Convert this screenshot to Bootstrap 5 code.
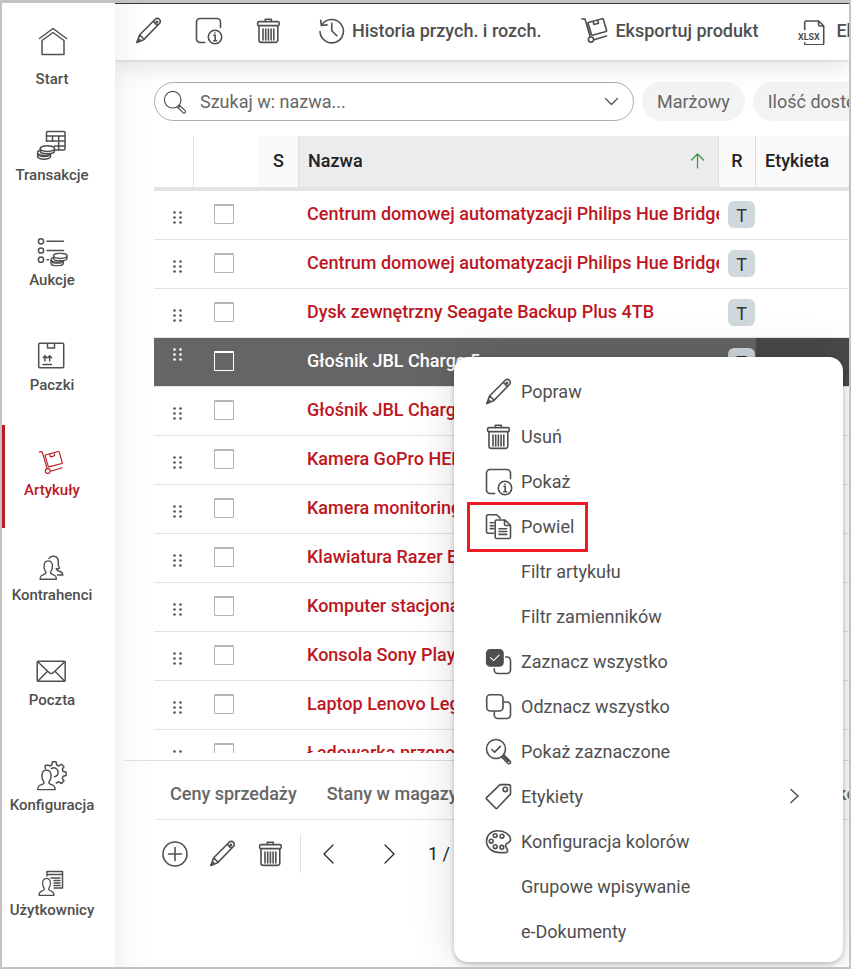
<!DOCTYPE html>
<html lang="pl">
<head>
<meta charset="utf-8">
<meta name="viewport" content="width=device-width, initial-scale=1">
<title>Artykuły</title>
<link rel="stylesheet" href="https://cdn.jsdelivr.net/npm/bootstrap@5.3.0/dist/css/bootstrap.min.css">
<style>
  :root { --ink: #4f4f4f; --red: #be1622; --rule: #e3e3e3; }
  body { font-family: Roboto, "Liberation Sans", sans-serif; font-size: 18px; line-height: 24px; color: var(--ink); }
  button { color: inherit; }
  svg { fill: none; stroke: currentColor; stroke-width: 1.5; stroke-linejoin: round; stroke-linecap: round; flex: none; display: block; }
  svg.thin { stroke-width: 1.2; }
  svg.sort-arrow { stroke: #2f9a3c; stroke-width: 1.2; }
  svg.grip-dots { fill: currentColor; stroke: none; }
  .app-frame { border: 2px solid #c3c3c3; border-top-width: 3px; min-height: 600px; }
  .side-nav { width: 113px; flex: none; padding-top: 2px; }
  .side-link { height: 105px; padding: 20px 13px 0 0; gap: 3px; font-size: 15px; line-height: 20px; font-weight: 500; color: var(--ink); text-decoration: none; position: relative; }
  .side-link:first-child { gap: 12px; }
  .side-link.active { color: var(--red); }
  .side-link.active::before { content: ""; position: absolute; left: 0; top: 0; width: 3px; height: 103px; background: var(--red); }
  .side-link svg { width: 32px; height: 32px; }
  .workspace { min-width: 0; border-top: 1px solid #343841; background: linear-gradient(to right, #f2f2f2, #fbfbfb 14px, #fff 40px); }
  .tool-bar { height: 56px; padding: 0 0 2px 20px; gap: 35px; background: linear-gradient(to right, #f6f6f6, #fff 30px); box-shadow: 0 1px 2px #d4d4d4, 0 6px 26px rgba(0,0,0,.12); flex: none; position: relative; }
  .tool-group { gap: 32px; }
  .text-group { gap: 40px; }
  .plain-btn { border: 0; background: none; padding: 0; display: flex; align-items: center; gap: 6px; white-space: nowrap; flex: none; }
  .text-group .plain-btn { font-weight: 500; }
  .text-group .plain-btn:last-child { gap: 10px; }
  .filter-bar { padding: 22px 0 15px 39px; gap: 8px; flex: none; }
  .search-box { flex: 0 0 480px; height: 39px; border: 1px solid #adadad; border-radius: 20px; background: #fff; padding: 0 14px 0 8px; }
  .search-box input { border: 0; outline: 0; background: none; min-width: 0; padding: 0 0 0 13px; color: #666; }
  .search-box input::placeholder { color: #666; opacity: 1; }
  .chip-btn { border: 0; border-radius: 20px; background: #f3f3f3; color: #666; padding: 0 15px; height: 39px; white-space: nowrap; flex: none; }
  .grid-wrap { margin: 0 0 7px 39px; flex: 1 1 0; min-height: 0; background: #fff; }
  .grid-table { table-layout: fixed; width: 100%; min-width: 695px; border-collapse: separate; border-spacing: 0; }
  .grid-table th { height: 55px; border-bottom: 4px solid var(--rule); padding: 0 0 2px 9px; font-weight: 500; color: #222; background: #fafafa; }
  .grid-table th.blank { background: #fff; }
  .grid-table th.sorted { background: #ececec; padding-right: 11px; }
  .grid-table th.edge { border-right: 1px solid #dedede; }
  .grid-table th.narrow { padding-left: 0; text-align: center; }
  .grid-table td { height: 49px; padding: 0; border-bottom: 1px solid var(--rule); white-space: nowrap; overflow: hidden; }
  .grid-table td.prod { padding: 0 0 2px 8px; font-weight: 500; color: var(--red); }
  .grid-table td.grip { padding: 5px 0 0 19px; color: #555; }
  .grid-table td.tick { padding: 0 0 2px 20px; }
  .grid-table tr.picked td { background: #656565; color: #fff; }
  .grid-table tr.picked td.grip { vertical-align: top; padding-top: 10px; }
  .grid-table tr.picked td.tagcol { background: #494949; }
  .tick input { appearance: none; display: block; width: 20px; height: 20px; margin: 0; border: 1px solid #b5b5b5; border-top-width: 2px; border-radius: 1px; background: #fff; }
  .picked .tick input { background: none; border-color: #fff; }
  .grid-table td.kind { padding: 0 0 2px 9px; }
  .type-tag { display: block; width: 27px; height: 27px; border-radius: 6px; background: #cfd8dd; color: #333; text-align: center; line-height: 29px; }
  .detail-pane { margin-left: 9px; border-top: 1px solid #dedede; height: 207px; flex: none; }
  .detail-tabs { margin-left: 32px; padding-left: 14px; gap: 30px; height: 59px; border-bottom: 1px solid var(--rule); padding-top: 8px; }
  .detail-tabs button { font-weight: 500; color: #666; }
  .detail-tabs .last-tab { width: 12px; margin-left: auto; }
  .detail-tools { margin: 14px 0 0 37px; height: 39px; }
  .detail-tools .edit-set { gap: 20px; padding-right: 15px; border-right: 1px solid var(--rule); height: 39px; }
  .detail-tools .page-set { gap: 33px; padding-left: 13px; color: #222; }
  .detail-tools .page-set span { margin-left: -8px; }
  .ctx-menu { position: absolute; right: 6px; bottom: 5px; width: 389px; padding: 12px 0 8px; border-radius: 14px; background: #fff; box-shadow: 0 2px 5px rgba(0,0,0,.24), 0 0 44px rgba(0,0,0,.14); }
  .ctx-item { height: 45px; width: 100%; border: 0; background: none; padding: 0 42px 0 31px; gap: 8px; text-align: left; position: relative; }
  .ctx-item.no-icon { padding-left: 67px; }
  .ctx-item.marked::after { content: ""; position: absolute; left: 13px; top: -2px; width: 121px; height: 50px; border: 3px solid #ed1c24; }
  .menu-icon { width: 28px; height: 28px; stroke-width: 1.6; }
</style>
</head>
<body>
<svg width="0" height="0" class="position-absolute" aria-hidden="true">
  <symbol id="i-pen" viewBox="0 0 28 28"><path d="M1.900 25.400l2.600-7.400L20.200 2.300a2.800 2.800 0 0 1 4.200 0 2.800 2.800 0 0 1 0 4.200L9 22.400zM4.900 18l3.900 4M18.400 4.400l4.100 4.200"/><path d="M2.200 25l2.400-2.400" stroke-width="2"/><circle cx="21.900" cy="5" r=".7"/></symbol>
  <symbol id="i-bin" viewBox="0 0 28 28"><rect x="2.600" y="4.600" width="21.600" height="4" rx="1.400"/><path d="M10.300 4.400V2.200h6v2.200M4 8.800V23a2.400 2.400 0 0 0 2.400 2.400h14A2.400 2.400 0 0 0 22.800 23V8.800M8 12v11M10.700 12v11M13.400 12v11M16.100 12v11M18.800 12v11"/></symbol>
  <symbol id="i-info" viewBox="0 0 28 28"><path d="M9.800 25.500H5a3.500 3.500 0 0 1-3.500-3.500V5A3.500 3.500 0 0 1 5 1.500h17A3.500 3.500 0 0 1 25.500 5v5.500"/><circle cx="20" cy="20" r="6.700"/><path d="M18.900 18.300h1.300v5.300M18.700 23.700h2.900M20 16v.3"/></symbol>
  <symbol id="i-copy" viewBox="0 0 28 28"><path d="M8.500 20.300H3a1.500 1.500 0 0 1-1.500-1.500V3.200A1.500 1.500 0 0 1 3 1.700h8.700l3.500 3.400M5.200 9.700h3.300M5.200 12.700h3.300M5.200 15.600h3.300M11.500 7H20l5.500 5.500v11.700a1.300 1.300 0 0 1-1.300 1.300H11.500a1.300 1.300 0 0 1-1.300-1.300V8.300A1.300 1.300 0 0 1 11.500 7zM19.500 7.300v3.900a1.300 1.300 0 0 0 1.300 1.300h4.400M14 15.700h7.700M14 18.500h7.700M14 21.400h7.700"/></symbol>
  <symbol id="i-all" viewBox="0 0 28 28"><rect x="1.700" y="1.700" width="16.300" height="16.300" rx="3.500" fill="currentColor"/><path d="M9.300 20.700V22a3.500 3.500 0 0 0 3.500 3.500h9.200a3.500 3.500 0 0 0 3.500-3.500v-9.500A3.500 3.500 0 0 0 22 9h-1.300"/><path d="M5.600 9.600l3 3 5.500-5.400" stroke="#fff" stroke-width="1.100"/></symbol>
  <symbol id="i-none" viewBox="0 0 28 28"><rect x="1.700" y="1.700" width="16.300" height="16.300" rx="3.500"/><path d="M9.300 18.500V22a3.500 3.500 0 0 0 3.500 3.500h9.200a3.500 3.500 0 0 0 3.500-3.500v-9.500A3.500 3.500 0 0 0 22 9h-3.500"/></symbol>
  <symbol id="i-found" viewBox="0 0 28 28"><circle cx="11" cy="11" r="9.500"/><path d="M6.800 11.500l2.900 2.600 5.600-5.700M16.500 19l6.300 6.300a1.500 1.500 0 0 0 2.200 0 1.500 1.500 0 0 0 0-2.200l-6.200-6.200M17.900 17.900l5.200 5.300"/></symbol>
  <symbol id="i-label" viewBox="0 0 28 28"><path d="M15 1.600h8.300a2.200 2.200 0 0 1 2.200 2.200v7.300L12.100 25.300a1 1 0 0 1-1.400 0L1.500 15.900a1 1 0 0 1 0-1.300z"/><circle cx="20.300" cy="6.400" r="2.200"/></symbol>
  <symbol id="i-palette" viewBox="0 0 28 28"><path d="M12.500 2.800C6 2.800 1.500 7.200 1.500 13.300c0 7 6.600 11.300 13.500 11.300h5.500c2 0 2.500-1.600 1.700-3.200-1.700-3.300-3-5 .7-6.500 1.900-.8 2.800-1.900 2.600-4.100C24.800 6.300 19.500 2.800 12.500 2.800z"/><circle cx="10.200" cy="7.600" r="1.900"/><circle cx="17" cy="8.200" r="1.900"/><circle cx="6.200" cy="13.200" r="1.900"/><circle cx="10.200" cy="18.700" r="1.900"/><circle cx="16.800" cy="19.300" r="1.900"/></symbol>
  <symbol id="i-cart" viewBox="0 0 28 28"><path d="M.8 2H4l5.300 18M13 22.800l12.500-3.700M7.300 5.400l14-3.700a.8.800 0 0 1 1 .6l3.300 11.200a.8.800 0 0 1-.6 1L11.300 18.200a.6.600 0 0 1-.8-.5L7 6a.5.500 0 0 1 .3-.6zM12 4.300l.9 3.100 4.600-1.200-.9-3.100"/><circle cx="10" cy="22.600" r="2.600"/></symbol>
  <symbol id="i-person" viewBox="0 0 20 22"><path d="M.8 21.200c0-3.600 1-4.200 3.200-4.900 2-.6 3.200-1.100 3.200-2.500 0-1.200-1.600-2.300-2-4.800C4.600 4.500 5.800 1 9.700 1s5.200 3.500 4.500 8c-.4 2.500-2 3.600-2 4.800 0 1.400 1.200 1.900 3.200 2.500 2.200.7 3.200 1.300 3.200 4.900z"/></symbol>
  <symbol id="i-coins" viewBox="0 0 19 15"><g fill="#fff"><ellipse cx="7.500" cy="11.200" rx="6.700" ry="3"/><path d="M.8 8.500c0 3.900 13.400 3.900 13.400 0z"/><ellipse cx="8" cy="7.600" rx="7" ry="2.800"/><path d="M3.800 4v2.300c0 3.300 14.200 3.300 14.200 0V4z"/><ellipse cx="10.900" cy="3.600" rx="7.200" ry="2.800"/></g></symbol>
</svg>

<div class="app-frame vh-100 d-flex overflow-hidden position-relative">
  <nav class="side-nav d-flex flex-column bg-white" aria-label="Menu główne">
    <a href="#" class="side-link d-flex flex-column align-items-center"><svg viewBox="36 25 32 32"><path d="M42 40.500V54.500H64V40.500L53 32.500zM39.500 38.500L53 28.500l13.500 10"/></svg>Start</a>
    <a href="#" class="side-link d-flex flex-column align-items-center"><svg viewBox="36 130 32 32"><rect x="46.500" y="131.500" width="18.500" height="18.500" rx="1"/><path d="M46.500 136H65M46.500 141H65M46.500 146H65M52.500 136v14M58.700 136v14"/><path d="M45 142h9v9h-9z" fill="#fff" stroke="none"/><use href="#i-coins" x="36.500" y="145" width="19" height="15"/></svg>Transakcje</a>
    <a href="#" class="side-link d-flex flex-column align-items-center"><svg viewBox="36 235 32 32"><circle cx="41" cy="241.300" r="2.600"/><circle cx="41" cy="250.500" r="2.600"/><circle cx="41" cy="259.700" r="2.600"/><path d="M47 241.300h16.500M47 250.500h16.500M47 259.700h1.500"/><use href="#i-coins" x="50" y="252.500" width="18" height="14"/></svg>Aukcje</a>
    <a href="#" class="side-link d-flex flex-column align-items-center"><svg viewBox="36 340 32 32"><rect x="38.700" y="343.200" width="25" height="24.500" rx="1"/><path d="M47.500 343.500v4.500h7v-4.500M43 364.500h8.500M45 361v-5M49.700 361v-5M43.300 357.600l1.700-1.800 1.700 1.800M48 357.600l1.700-1.800 1.700 1.800"/></svg>Paczki</a>
    <a href="#" class="side-link active d-flex flex-column align-items-center" aria-current="page"><svg class="thin" viewBox="36 445 32 32"><use href="#i-cart" x="38.500" y="450" width="26" height="26"/></svg>Artykuły</a>
    <a href="#" class="side-link d-flex flex-column align-items-center"><svg viewBox="36 550 32 32"><path d="M49 558.500c1-2 3-2.500 5-2.200 3.500.5 4.600 3.200 4.300 6.500-.2 2.500.3 4.300 1.300 5.200-1 .7-2.300.8-3.300.6 0 1.600 1 2 3 2.700 2.500.8 3.400 1.500 3.500 3.700h-5.300"/><use href="#i-person" x="38.500" y="560" width="20" height="20" fill="#fff"/></svg>Kontrahenci</a>
    <a href="#" class="side-link d-flex flex-column align-items-center"><svg viewBox="36 655 32 32"><rect x="37.200" y="661.200" width="28" height="20" rx="1"/><path d="M38 662l11 10.500c1.500 1.300 3 1.300 4.500 0L64.500 662M38 681l9.500-9.800M64.500 681L55 671.200"/></svg>Poczta</a>
    <a href="#" class="side-link d-flex flex-column align-items-center"><svg viewBox="36 760 32 32"><path d="M45.300 768.500v-3l3-.5 1.500 1 2-1 .7-3.300h3.500l.8 3.300 2 1 2.700-1.800 2.500 2.500-1.700 2.700.8 2 3 .7v3.400l-3 .8-.8 2 1.700 2.700-2.500 2.500-2.700-1.700-2.500 1.200"/><path d="M51.500 768.500c3-1.700 6.600.3 6.600 3.700 0 2.400-1.500 4-3.600 4.500"/><use href="#i-person" x="37" y="769" width="19.500" height="21.500" fill="#fff"/></svg>Konfiguracja</a>
    <a href="#" class="side-link d-flex flex-column align-items-center"><svg viewBox="36 865 32 32"><path d="M47 876v-4.500h15.500V888H54M47 874.500h15.500M51 878h9M54 880.500h6M54 883h6M54 885.500h6"/><use href="#i-person" x="37.500" y="877.500" width="18.500" height="18.500" fill="#fff"/></svg>Użytkownicy</a>
  </nav>

  <main class="workspace flex-fill d-flex flex-column overflow-hidden">
    <div class="tool-bar d-flex align-items-center" role="toolbar" aria-label="Narzędzia">
      <div class="tool-group d-flex">
        <button class="plain-btn" aria-label="Popraw"><svg class="menu-icon"><use href="#i-pen"/></svg></button>
        <button class="plain-btn" aria-label="Pokaż"><svg class="menu-icon"><use href="#i-info"/></svg></button>
        <button class="plain-btn" aria-label="Usuń"><svg class="menu-icon"><use href="#i-bin"/></svg></button>
      </div>
      <div class="text-group d-flex">
        <button class="plain-btn"><svg class="menu-icon" viewBox="0 0 28 28"><path d="M2 14.500A11.700 11.700 0 1 0 4 7.600M2.700 3.300l.6 5.200 5.700-.6M13.800 6.200v7.500l5 5"/></svg>Historia przych. i rozch.</button>
        <button class="plain-btn"><svg class="menu-icon"><use href="#i-cart"/></svg>Eksportuj produkt</button>
        <button class="plain-btn"><svg class="menu-icon" viewBox="-1 -3 28 28"><path d="M5.700 9.500V2.500A1.500 1.500 0 0 1 7.200 1h12.500l5 5v17.500a1.300 1.300 0 0 1-1.300 1.300H7a1.300 1.300 0 0 1-1.300-1.300v-.8M19.500 1.500v3A1.500 1.500 0 0 0 21 6h3.500"/><text x="-1" y="20" font-size="9" font-weight="700" fill="currentColor" stroke="none">XLSX</text></svg>Eksportuj listę</button>
      </div>
    </div>

    <div class="filter-bar d-flex">
      <div class="search-box d-flex align-items-center">
        <svg class="thin" width="24" height="24" viewBox="0 0 24 24"><circle cx="9.700" cy="9.700" r="8.300"/><path d="M14.500 17.200l5.600 5.400a1.400 1.400 0 0 0 2-2l-5.600-5.400M15.700 16l.8.800"/></svg>
        <input type="search" class="flex-fill" placeholder="Szukaj w: nazwa..." aria-label="Szukaj">
        <button class="plain-btn" aria-label="Rozwiń"><svg class="thin" width="15" height="9" viewBox="0 0 15 9"><path d="M1.500 1.500l6 6 6-6"/></svg></button>
      </div>
      <button class="chip-btn">Marżowy</button>
      <button class="chip-btn">Ilość dostępna</button>
    </div>

    <div class="grid-wrap overflow-hidden">
      <table class="grid-table">
        <colgroup><col style="width:40px"><col style="width:65px"><col style="width:40px"><col style="width:420px"><col style="width:37px"><col></colgroup>
        <thead><tr>
          <th class="blank edge"></th><th class="blank"></th><th class="edge narrow">S</th>
          <th class="sorted edge"><span class="d-flex justify-content-between align-items-center">Nazwa<svg class="sort-arrow" width="19" height="19" viewBox="0 0 19 19"><path d="M9.500 17V3M3.500 9l6-6 6 6"/></svg></span></th>
          <th class="edge narrow">R</th><th>Etykieta</th>
        </tr></thead>
        <tbody id="product-rows"></tbody>
      </table>
    </div>

    <section class="detail-pane">
      <div class="detail-tabs d-flex align-items-center">
        <button class="plain-btn">Ceny sprzedaży</button>
        <button class="plain-btn">Stany w magazynach</button>
        <button class="plain-btn last-tab">kody</button>
      </div>
      <div class="detail-tools d-flex align-items-center">
        <div class="edit-set d-flex align-items-center">
          <button class="plain-btn" aria-label="Dodaj"><svg class="menu-icon" viewBox="0 0 28 28"><circle cx="14" cy="14" r="12"/><path d="M14 7.500v13M7.500 14h13"/></svg></button>
          <button class="plain-btn" aria-label="Popraw"><svg class="menu-icon"><use href="#i-pen"/></svg></button>
          <button class="plain-btn" aria-label="Usuń"><svg class="menu-icon"><use href="#i-bin"/></svg></button>
        </div>
        <div class="page-set d-flex align-items-center">
          <button class="plain-btn" aria-label="Poprzednia"><svg class="menu-icon thin" viewBox="0 0 28 28"><path d="M19 5l-9 9 9 9"/></svg></button>
          <button class="plain-btn" aria-label="Następna"><svg class="menu-icon thin" viewBox="0 0 28 28"><path d="M10 5l9 9-9 9"/></svg></button>
          <span>1 / 1</span>
        </div>
      </div>
    </section>
  </main>

  <div class="ctx-menu" role="menu">
    <button role="menuitem" class="ctx-item d-flex align-items-center"><svg class="menu-icon"><use href="#i-pen"/></svg>Popraw</button>
    <button role="menuitem" class="ctx-item d-flex align-items-center"><svg class="menu-icon"><use href="#i-bin"/></svg>Usuń</button>
    <button role="menuitem" class="ctx-item d-flex align-items-center"><svg class="menu-icon"><use href="#i-info"/></svg>Pokaż</button>
    <button role="menuitem" class="ctx-item marked d-flex align-items-center"><svg class="menu-icon"><use href="#i-copy"/></svg>Powiel</button>
    <button role="menuitem" class="ctx-item no-icon d-flex align-items-center">Filtr artykułu</button>
    <button role="menuitem" class="ctx-item no-icon d-flex align-items-center">Filtr zamienników</button>
    <button role="menuitem" class="ctx-item d-flex align-items-center"><svg class="menu-icon"><use href="#i-all"/></svg>Zaznacz wszystko</button>
    <button role="menuitem" class="ctx-item d-flex align-items-center"><svg class="menu-icon"><use href="#i-none"/></svg>Odznacz wszystko</button>
    <button role="menuitem" class="ctx-item d-flex align-items-center"><svg class="menu-icon"><use href="#i-found"/></svg>Pokaż zaznaczone</button>
    <button role="menuitem" class="ctx-item d-flex align-items-center"><svg class="menu-icon"><use href="#i-label"/></svg>Etykiety<svg class="ms-auto" width="14" height="18" viewBox="0 0 14 18"><path d="M4 1.500L11 8l-7 6.500"/></svg></button>
    <button role="menuitem" class="ctx-item d-flex align-items-center"><svg class="menu-icon"><use href="#i-palette"/></svg>Konfiguracja kolorów</button>
    <button role="menuitem" class="ctx-item no-icon d-flex align-items-center">Grupowe wpisywanie</button>
    <button role="menuitem" class="ctx-item no-icon d-flex align-items-center">e-Dokumenty</button>
  </div>
</div>

<script src="https://cdn.jsdelivr.net/npm/bootstrap@5.3.0/dist/js/bootstrap.bundle.min.js"></script>
<script>
  const products = [
    'Centrum domowej automatyzacji Philips Hue Bridge', 'Centrum domowej automatyzacji Philips Hue Bridge',
    'Dysk zewnętrzny Seagate Backup Plus 4TB', 'Głośnik JBL Charge 5', 'Głośnik JBL Charge 5',
    'Kamera GoPro HERO', 'Kamera monitoringu', 'Klawiatura Razer BlackWidow', 'Komputer stacjonarny',
    'Konsola Sony PlayStation', 'Laptop Lenovo Legion', 'Ładowarka przenośna'
  ];
  const selected = 3;
  const dots = [1.5, 6.5, 11.5].map(y => `<circle cx="1.500" cy="${y}" r="1.300"/><circle cx="7.500" cy="${y}" r="1.300"/>`).join('');
  document.getElementById('product-rows').innerHTML = products.map((name, i) => `
    <tr class="${i === selected ? 'picked' : ''}">
      <td class="grip"><svg class="grip-dots" width="10" height="14" viewBox="0 0 10 14">${dots}</svg></td>
      <td class="tick"><input type="checkbox" aria-label="${name}"></td>
      <td></td>
      <td class="prod">${name}</td>
      <td class="kind"><span class="type-tag">T</span></td>
      <td class="tagcol"></td>
    </tr>`).join('');
</script>
</body>
</html>
